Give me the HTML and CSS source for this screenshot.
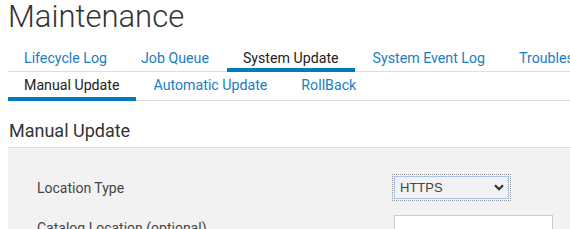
FILE: index.html
```html
<!DOCTYPE html>
<html lang="en">
<head>
  <meta charset="UTF-8">
  <title>Maintenance</title>
  <link rel="stylesheet" href="styles.css">
</head>
<body>
  <div class="page">
    <h1 class="title">Maintenance</h1>

    <!-- main tabs -->
    <nav class="tabs tabs-main">
      <a class="tab">Lifecycle Log</a>
      <a class="tab">Job Queue</a>
      <a class="tab active">System Update</a>
      <a class="tab">System Event Log</a>
      <a class="tab">Troubleshooting</a>
    </nav>

    <!-- sub tabs -->
    <nav class="tabs tabs-sub">
      <a class="tab active">Manual Update</a>
      <a class="tab">Automatic Update</a>
      <a class="tab">RollBack</a>
    </nav>

    <h2 class="section-title">Manual Update</h2>

    <div class="panel">
      <div class="form-row">
        <label class="form-label">Location Type</label>
        <div class="select-wrap">
          <select class="select">
            <option>HTTPS</option>
          </select>
          <svg class="select-arrow" width="10" height="7" viewBox="0 0 10 7">
            <path d="M1 1.2 L5 5.2 L9 1.2" fill="none" stroke="#333" stroke-width="2.2"/>
          </svg>
        </div>
      </div>
      <div class="form-row">
        <label class="form-label">Catalog Location (optional)</label>
        <input class="text-input" type="text">
      </div>
    </div>
  </div>
</body>
</html>
```

FILE: styles.css
```css
body {
  margin: 0;
  font-family: Roboto, "Noto Sans", sans-serif;
  background: #fff;
  color: #333;
  overflow: hidden;
}

.page {
  padding: 0 0 0 8px;
}

.title {
  margin: 0 0 10px 0;
  padding-top: 1px;
  font-size: 31px;
  font-weight: 300;
  line-height: 32px;
  color: #333;
}

.tabs {
  display: flex;
  gap: 2px;
  white-space: nowrap;
  border-bottom: 1px solid #ddd;
}

.tab {
  display: block;
  font-size: 14.2px;
  line-height: 20px;
  color: #1a7dc2;
  border-bottom: 4px solid transparent;
  margin-bottom: -1px;
  padding: 5px 16px 0;
  cursor: pointer;
}

.tabs-sub .tab {
  padding: 3px 16px 2px;
}

.tab.active {
  color: #222;
  border-bottom-color: #007db8;
}

.section-title {
  margin: 18px 0 0 0;
  padding: 0 0 4px 1px;
  font-size: 18px;
  font-weight: 400;
  line-height: 24px;
  color: #333;
  border-bottom: 1px solid #ddd;
}

.panel {
  background: #f2f2f2;
  padding: 28px 0 20px 29px;
  min-height: 100px;
}

.form-row {
  display: grid;
  grid-template-columns: 357px 1fr;
  align-items: center;
  margin-bottom: 16px;
}

.form-label {
  font-size: 14px;
  line-height: 20px;
  color: #444;
}

.select-wrap {
  position: relative;
  width: 115px;
}

.select {
  appearance: none;
  -webkit-appearance: none;
  display: block;
  width: 115px;
  height: 23px;
  box-sizing: border-box;
  margin: 0;
  padding: 0 0 0 5px;
  border: 1px solid #a6c4ee;
  border-radius: 0;
  outline: 1px dotted #999;
  outline-offset: 1px;
  background: #f2f2f2;
  font-family: "Liberation Sans", Arial, sans-serif;
  font-size: 13px;
  font-weight: 400;
  color: #444;
}

.select-arrow {
  position: absolute;
  right: 5px;
  top: 8px;
  pointer-events: none;
}

.text-input {
  display: block;
  width: 159px;
  height: 26px;
  box-sizing: border-box;
  border: 1px solid #ccc;
  background: #fff;
  margin: 0;
}
```
